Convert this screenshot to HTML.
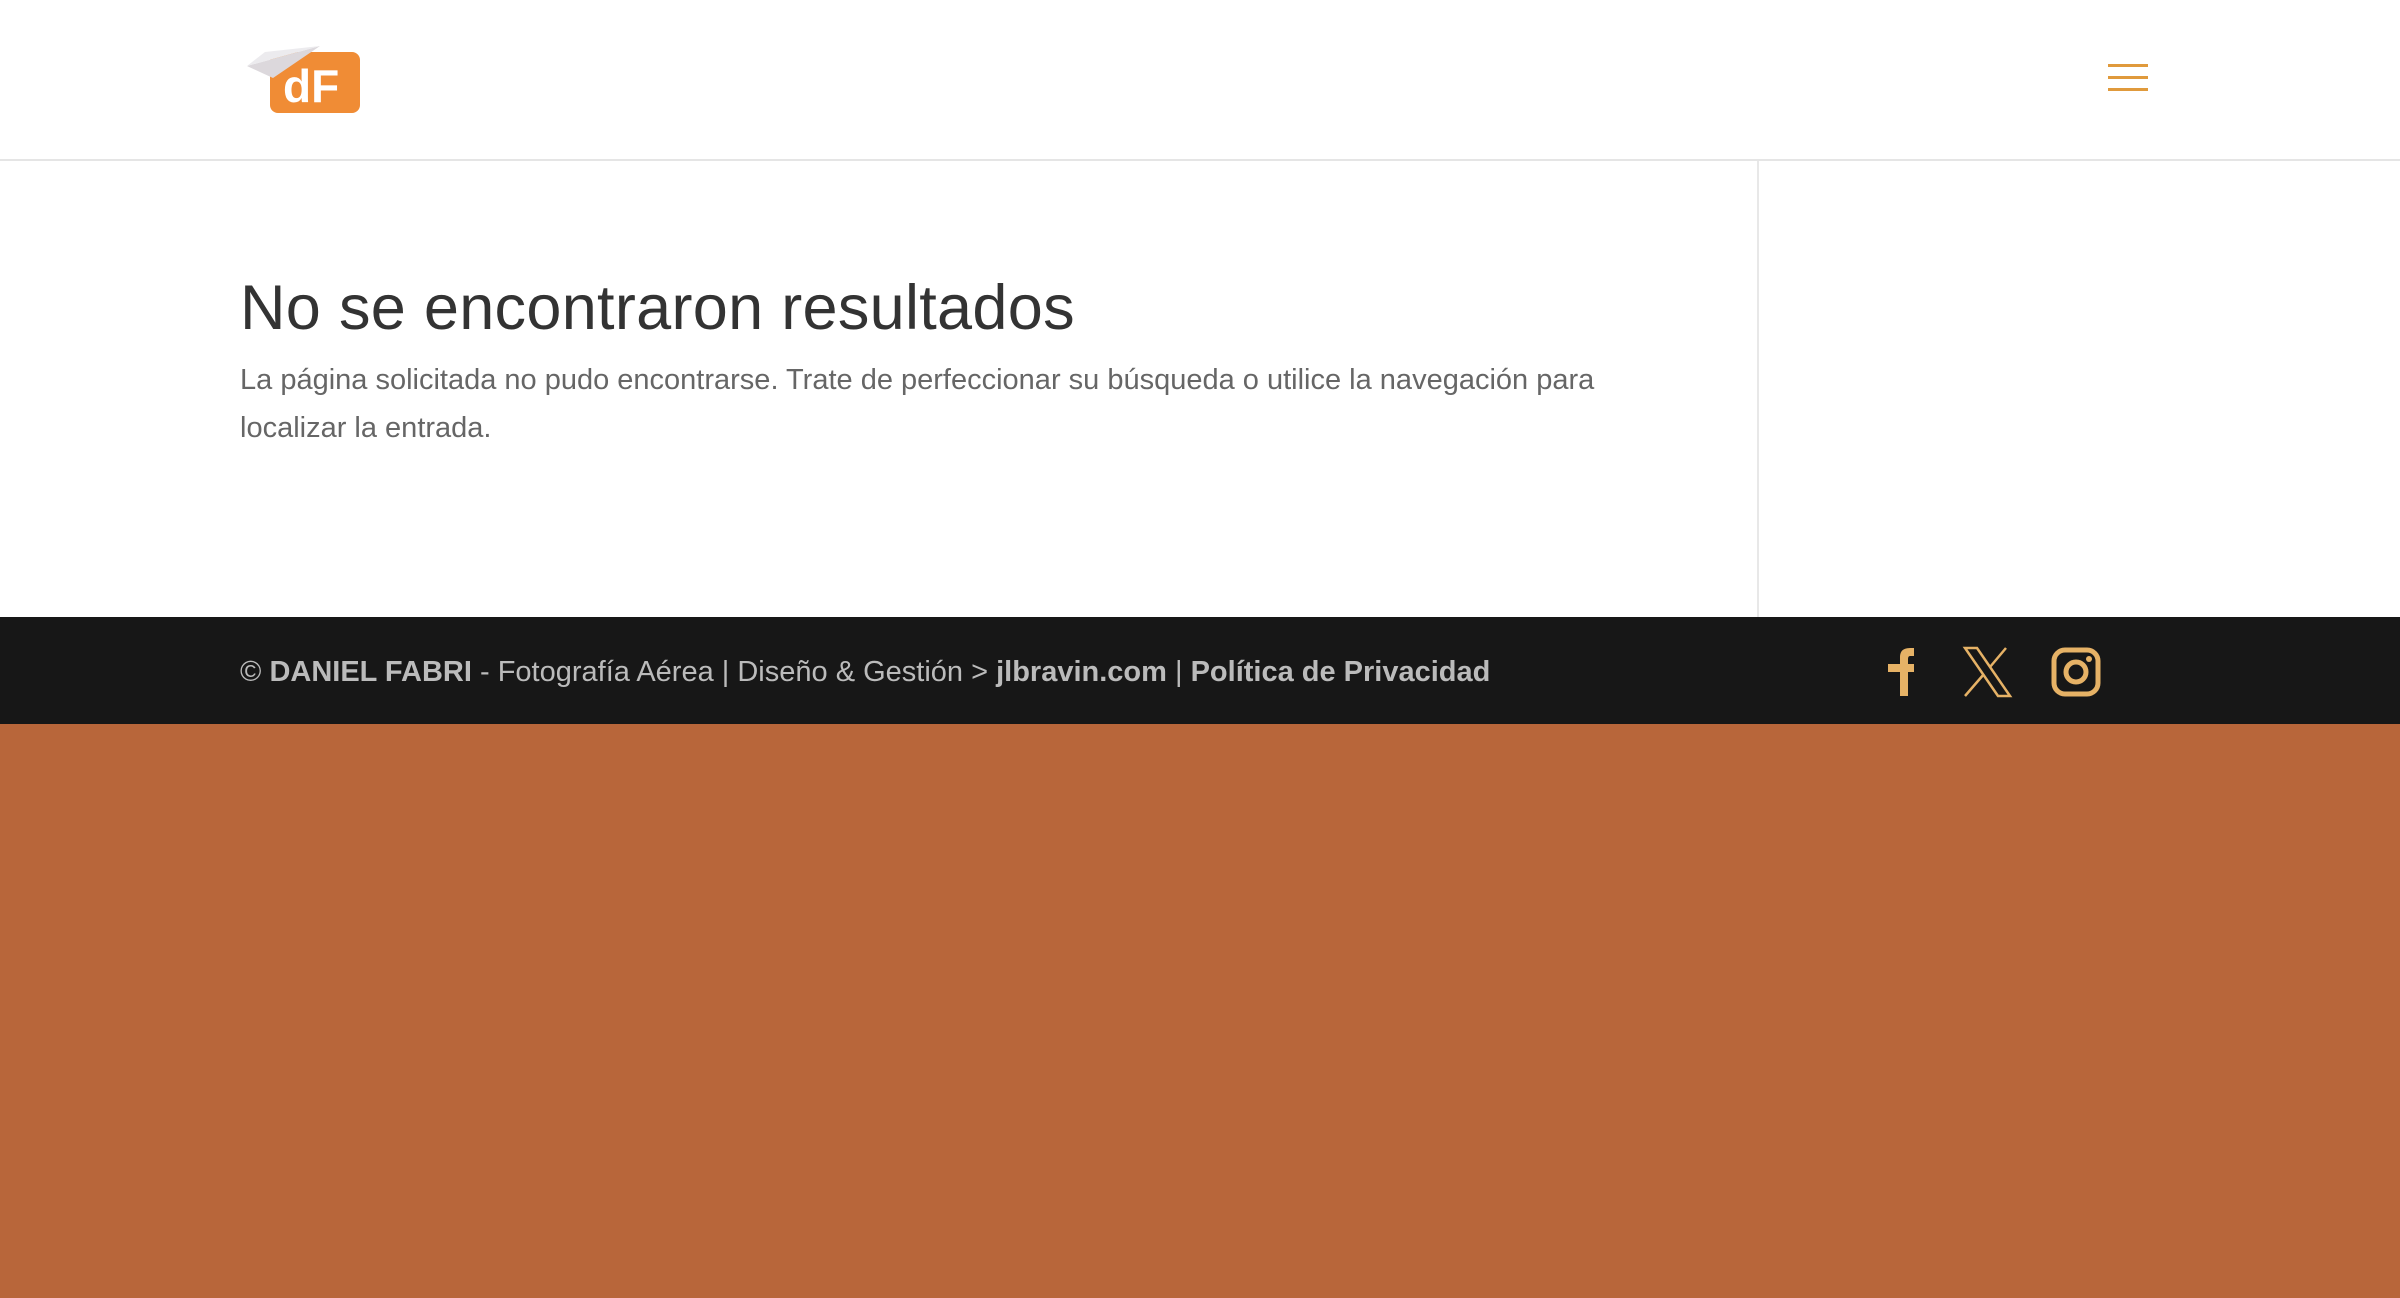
<!DOCTYPE html>
<html><head><meta charset="utf-8"><style>
body{margin:0;width:2400px;height:1298px;background:#b8663a;font-family:"Liberation Sans",sans-serif;overflow:hidden;position:relative}
.hdr{position:absolute;left:0;top:0;width:2400px;height:159px;background:#fff;border-bottom:2px solid #e5e5e5}
.main{position:absolute;left:0;top:161px;width:2400px;height:456px;background:#fff}
.vl{position:absolute;left:1757px;top:0;width:2px;height:456px;background:#e8e8e8}
h1{position:absolute;left:240px;top:272px;margin:0;font-weight:normal;font-size:63px;color:#333;letter-spacing:0.3px}
p{position:absolute;left:240px;top:356px;margin:0;width:1450px;font-size:29px;line-height:48px;color:#666}
.ft{position:absolute;left:0;top:617px;width:2400px;height:107px;background:#171717}
.ft .t{position:absolute;left:240px;top:39px;font-size:29px;color:#bbb;white-space:nowrap}
.ft b{color:#bbb}
.hb{position:absolute;left:2108px;width:40px;height:3px;background:#e09a3c}
</style></head><body>
<div class="hdr">
<svg style="position:absolute;left:245px;top:38px" width="120" height="80" viewBox="0 0 120 80">
<rect x="25" y="14" width="90" height="61" rx="8" fill="#f08c35"/>
<path d="M2 28 L75 8 L28 40 Z" fill="#dcd8dc"/><path d="M20 14 L75 8 L2 28 Z" fill="#ecebee"/>
<text x="38" y="64" font-family="Liberation Sans" font-weight="bold" font-size="46" fill="#fff">dF</text>
</svg>
<div class="hb" style="top:64px"></div><div class="hb" style="top:76px"></div><div class="hb" style="top:88px"></div>
</div>
<div class="main"><div class="vl"></div></div>
<h1>No se encontraron resultados</h1>
<p>La página solicitada no pudo encontrarse. Trate de perfeccionar su búsqueda o utilice la navegación para localizar la entrada.</p>
<div class="ft"><div class="t">© <b>DANIEL FABRI</b> - Fotografía Aérea | Diseño &amp; Gestión &gt; <b>jlbravin.com</b> | <b>Política de Privacidad</b></div>
<svg style="position:absolute;left:1880px;top:28px" width="240" height="54" viewBox="0 0 240 54">
<path d="M20 51 V27 H8 V19 H20 V12 Q20 3 30 3 H34 V11 H30 Q28 11 28 14 V19 H34 V27 H28 V51 Z" fill="#e6b266"/>
<path d="M85 3 H97 L130 51 H118 Z" fill="none" stroke="#e6b266" stroke-width="2.5"/>
<path d="M85 51 L104 29 M110 22 L126 3" stroke="#e6b266" stroke-width="2.5"/>
<rect x="174" y="5" width="44" height="44" rx="11" fill="none" stroke="#e6b266" stroke-width="5"/>
<circle cx="196" cy="27" r="10" fill="none" stroke="#e6b266" stroke-width="5"/>
<circle cx="209" cy="14" r="3" fill="#e6b266"/>
</svg></div>
</body></html>
